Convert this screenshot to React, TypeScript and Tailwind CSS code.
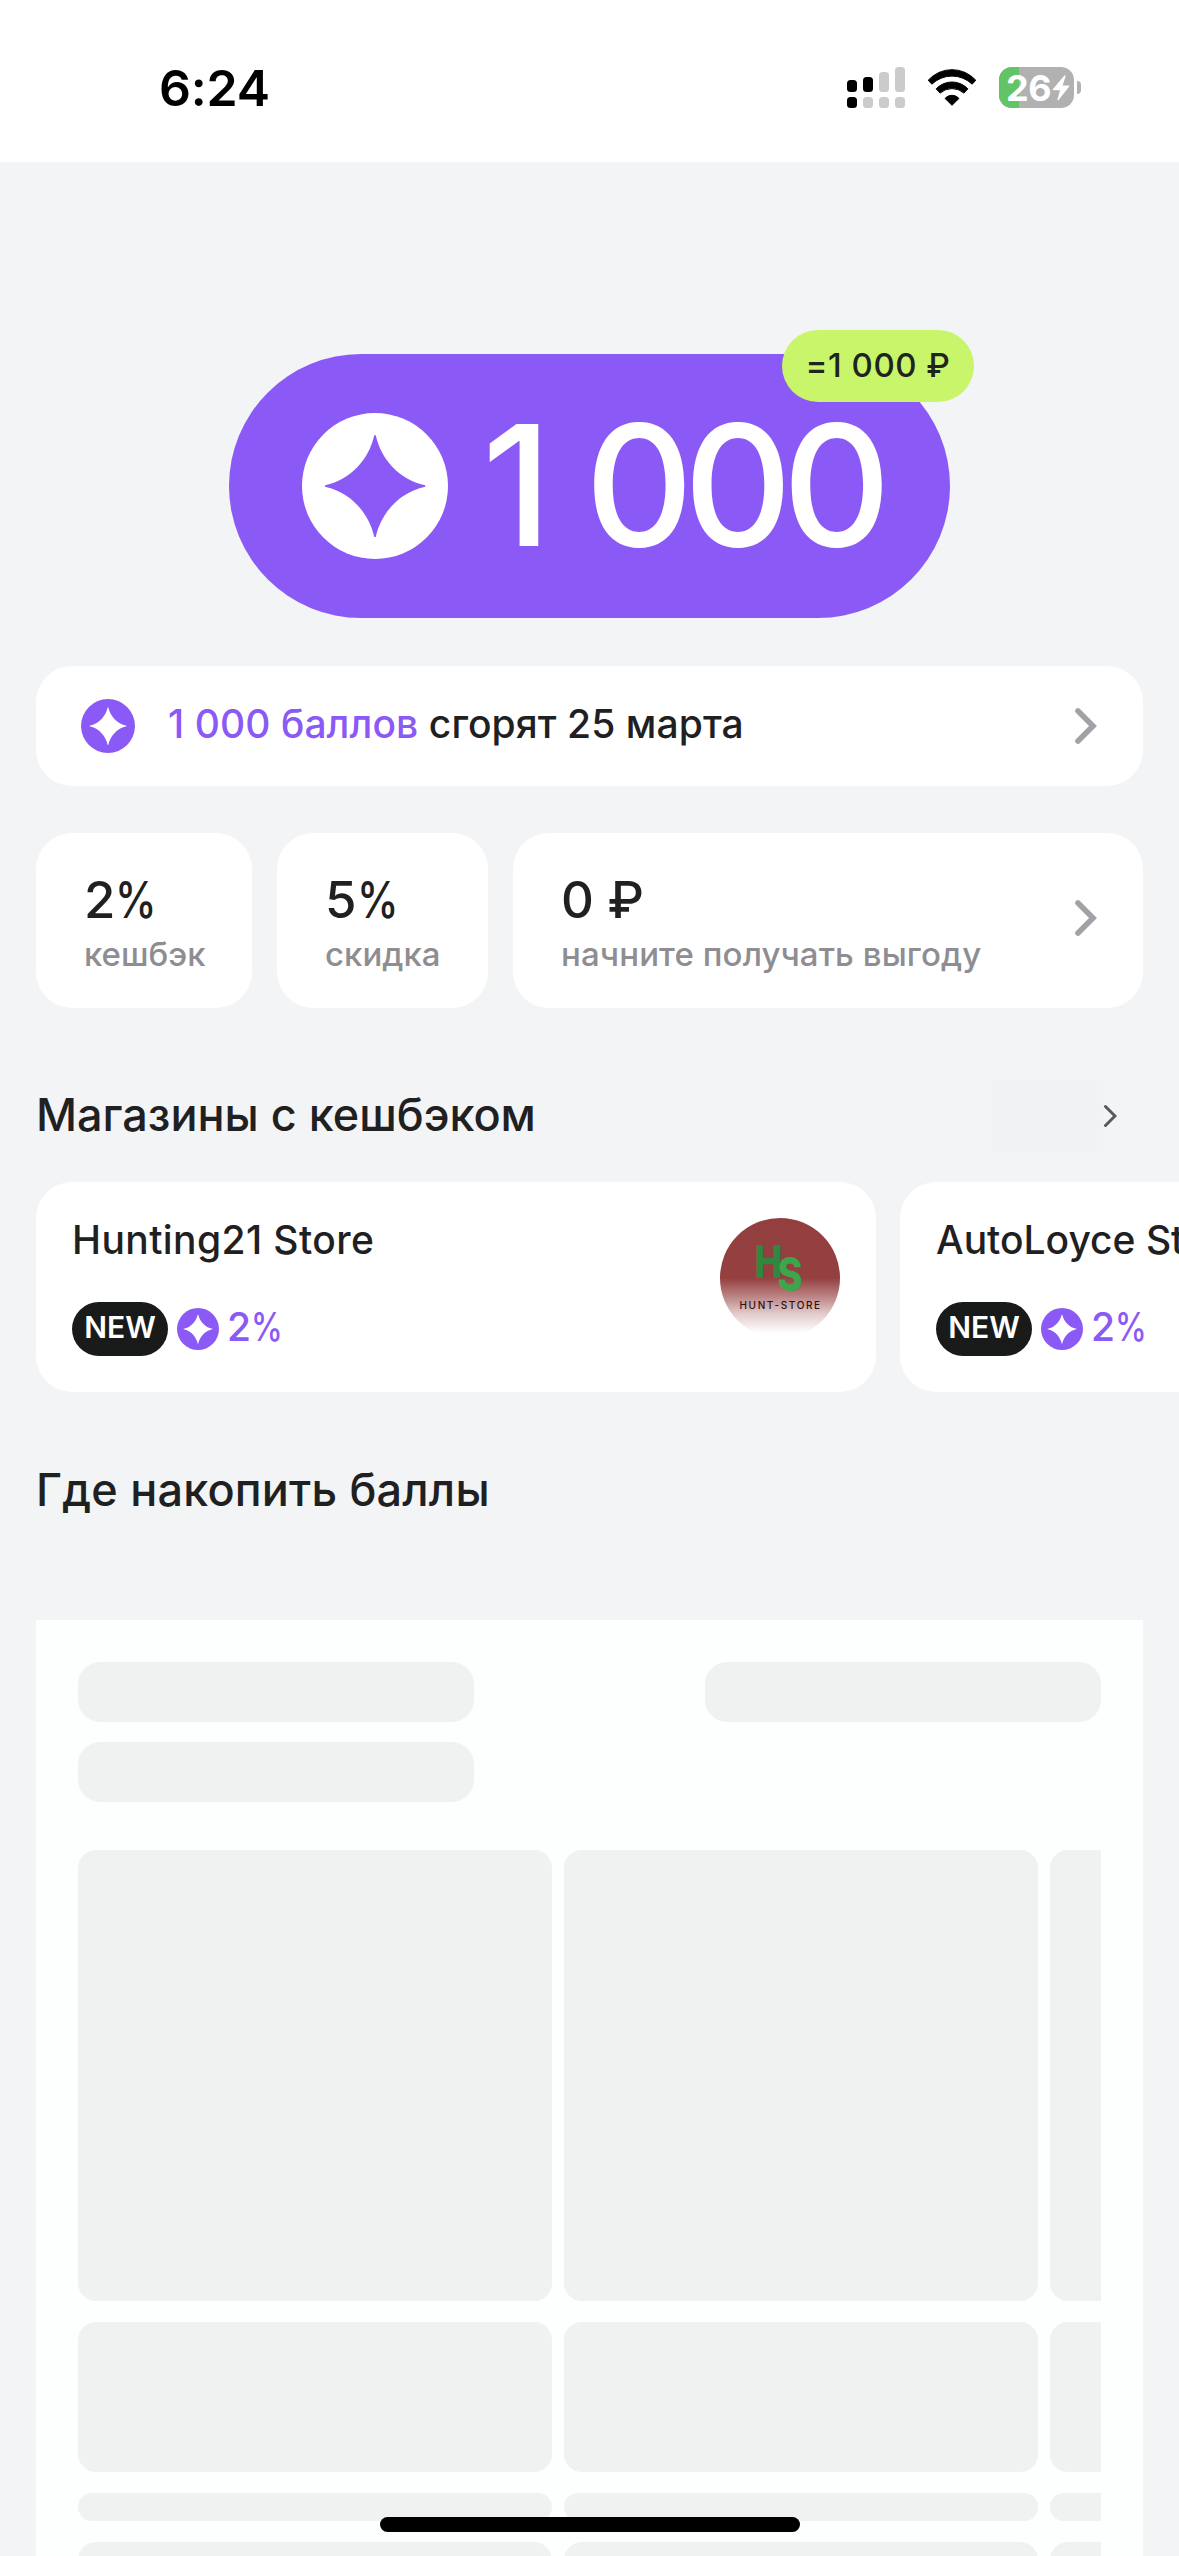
const stores = [
  { name: "Hunting21 Store", cashback: "2", tracking: "tracking-[0.4px]", logo: true },
  { name: "AutoLoyce Store", cashback: "2", tracking: "tracking-normal", logo: false },
]

const skeletonRows = ["h-[451px]", "h-[150px]", "h-7", "h-[150px]"]

interface StarCoinProps {
  className?: string
  star?: string
}

function StarCoin({ className = "", star = "fill-white" }: StarCoinProps) {
  return (
    <svg viewBox="0 0 100 100" className={`shrink-0 ${className}`}>
      <circle cx="50" cy="50" r="50" fill="currentColor" />
      <path
        className={star}
        d="M49.5 15.2h1C54 31 66 45.5 84.4 49.5v1C66 54.5 54 69 50.5 85h-1C46 69 34 54.5 15.8 50.5v-1C34 45.5 46 31 49.5 15.2Z"
      />
    </svg>
  )
}

function Chevron() {
  return (
    <svg viewBox="0 0 24 40" className="h-10 w-6 shrink-0 text-[#a1a1a6]" fill="none">
      <path d="M5 5l15 15L5 35" stroke="currentColor" strokeWidth="5.6" strokeLinecap="round" />
    </svg>
  )
}

function Percent({ value }: { value: string }) {
  return (
    <span className="whitespace-nowrap">
      {value}
      <span className="inline-block origin-left scale-x-[0.82]">%</span>
    </span>
  )
}

function StatusBar() {
  return (
    <header className="flex h-[162px] items-start justify-between bg-white pl-[159px] pr-[98px] text-black">
      <span className="mt-[58px] text-[50px] font-semibold leading-[60px] tracking-[-0.2px]">6:24</span>
      <div className="mt-[67px] flex">
        <svg viewBox="0 0 58 41" className="h-[41px] w-[58px]">
          <rect x="0" y="13" width="10" height="12" rx="3.5" />
          <rect x="16" y="10" width="10" height="15" rx="3.5" />
          <g fill="#cbcbcb">
            <rect x="32" y="5" width="10" height="20" rx="3.5" />
            <rect x="48" y="0" width="10" height="25" rx="3.5" />
            <rect x="16" y="30" width="10" height="11" rx="3.5" />
            <rect x="32" y="30" width="10" height="11" rx="3.5" />
            <rect x="48" y="30" width="10" height="11" rx="3.5" />
          </g>
          <rect x="0" y="30" width="10" height="11" rx="3.5" />
        </svg>
        <svg viewBox="0 0 150 112" className="ml-[22px] mt-[2px] h-[37px] w-[50px]">
          <g stroke="#000" strokeWidth="3" strokeLinejoin="round">
            <path d="M3 34A97 97 0 0 1 147 34L136 46A88 88 0 0 0 14 46Z" />
            <path d="M27 60A66 66 0 0 1 123 60L111 73A54 54 0 0 0 39 73Z" />
            <path d="M54 89A28 28 0 0 1 96 89L75 110Z" />
          </g>
        </svg>
        <div className="relative ml-[22px] h-[41px] w-[75px] overflow-hidden rounded-[13px] bg-[#b1b1b1]">
          <div className="h-full w-5 bg-[#62c466]" />
          <div className="absolute inset-0 flex items-center pl-[7px]">
            <span className="text-[36px] font-bold leading-none tracking-[-0.5px] text-white">26</span>
            <svg viewBox="0 0 18 26" className="ml-px h-[26px] w-[18px] fill-white">
              <path d="M12.4.6 1 14q-.8 1.200.6 1.200H8L5.400 24.800q.3.900 1.200.200L17 11.700q.8-1.300-.6-1.300H10.600L13.600 1.200Q13.200-.2 12.400.6Z" />
            </svg>
          </div>
        </div>
        <div className="ml-[3px] mt-[14px] h-[13px] w-1 rounded-r-full bg-[#b1b1b1]" />
      </div>
    </header>
  )
}

function BalancePill() {
  return (
    <div className="relative mx-auto flex h-[264px] w-[721px] items-center rounded-full bg-[#8b59f6] pl-[73px] text-white">
      <StarCoin className="size-[146px]" star="fill-[#8b59f6]" />
      <span className="ml-[34px] whitespace-nowrap pb-0.5 text-[168px] font-medium leading-none tracking-[-9.7px] [word-spacing:8px]">
        1 000
      </span>
      <div className="absolute -right-6 -top-6 flex h-[72px] w-48 items-center justify-center rounded-full bg-[#c8f569] text-[33px] font-medium tracking-[0.5px] text-[#1f2420]">
        =1 000 ₽
      </div>
    </div>
  )
}

function Stats() {
  return (
    <section className="mt-[47px] flex gap-[25px] whitespace-nowrap">
      <div className="h-[175px] w-[216px] rounded-[36px] bg-white pl-12 pt-[42px]">
        <p className="text-[51px] font-medium leading-[50px]"><Percent value="2" /></p>
        <p className="mt-[9px] text-[33px] font-medium leading-10 text-[#8e8e92]">кешбэк</p>
      </div>
      <div className="h-[175px] w-[211px] rounded-[36px] bg-white pl-12 pt-[42px]">
        <p className="text-[51px] font-medium leading-[50px]"><Percent value="5" /></p>
        <p className="mt-[9px] text-[33px] font-medium leading-10 text-[#8e8e92]">скидка</p>
      </div>
      <div className="flex h-[175px] flex-1 items-center justify-between rounded-[36px] bg-white pl-12 pr-[46px]">
        <div className="h-full pt-[42px]">
          <p className="text-[51px] font-medium leading-[50px]">0 ₽</p>
          <p className="mt-[9px] text-[33px] font-medium leading-10 tracking-[0.1px] text-[#8e8e92]">
            начните получать выгоду
          </p>
        </div>
        <div className="pb-[5px]">
          <Chevron />
        </div>
      </div>
    </section>
  )
}

function HuntStoreLogo() {
  return (
    <svg viewBox="0 0 120 120" className="size-[120px] shrink-0 font-[Inter,sans-serif]">
      <defs>
        <linearGradient id="hunt-bg" x1="0" y1="0" x2="0" y2="1">
          <stop offset="0" stopColor="#943f3f" />
          <stop offset="0.5" stopColor="#943f40" />
          <stop offset="0.64" stopColor="#b87d7d" />
          <stop offset="0.8" stopColor="#e3cccc" />
          <stop offset="0.96" stopColor="#ffffff" />
        </linearGradient>
      </defs>
      <circle cx="60" cy="60" r="60" fill="url(#hunt-bg)" />
      <text x="34.500" y="59.500" fontSize="45" fontWeight="800" fill="#2f8740" textLength="28" lengthAdjust="spacingAndGlyphs">H</text>
      <text x="57.500" y="72.500" fontSize="46" fontWeight="800" fill="#3da54b" textLength="25" lengthAdjust="spacingAndGlyphs">S</text>
      <text x="19.500" y="91" fontSize="10" fontWeight="500" fill="#2a1212" letterSpacing="1.650">HUNT-STORE</text>
    </svg>
  )
}

function StoreCards() {
  return (
    <div className="mt-[30px] flex gap-6">
      {stores.map((store) => (
        <article key={store.name} className="flex h-[210px] w-[840px] shrink-0 justify-between rounded-[36px] bg-white px-9">
          <div className="pt-[34px]">
            <h3 className={`whitespace-nowrap text-[39px] font-medium leading-[48px] ${store.tracking}`}>{store.name}</h3>
            <div className="mt-[38px] flex h-[54px] items-center">
              <span className="flex h-[54px] w-24 items-center justify-center rounded-full bg-[#191a1a] pb-1 text-[30px] font-semibold text-white">
                NEW
              </span>
              <StarCoin className="ml-[9px] size-[42px] text-[#8b59f6]" />
              <span className="ml-2 pb-1.5 text-[39px] font-medium leading-none text-[#8b59f6]">
                <Percent value={store.cashback} />
              </span>
            </div>
          </div>
          {store.logo && (
            <div className="pt-9">
              <HuntStoreLogo />
            </div>
          )}
        </article>
      ))}
    </div>
  )
}

function PlacesSkeleton() {
  return (
    <section className="mt-[100px] h-[960px] bg-[#fdfffe] px-[42px] pt-[42px]">
      <div className="flex items-start justify-between">
        <div className="flex flex-col gap-5">
          <div className="h-[60px] w-[396px] rounded-[22px] bg-[#f0f2f1]" />
          <div className="h-[60px] w-[396px] rounded-[22px] bg-[#f0f2f1]" />
        </div>
        <div className="h-[60px] w-[396px] rounded-[22px] bg-[#f0f2f1]" />
      </div>
      <div className="mt-12 flex flex-col gap-[21px] overflow-hidden">
        {skeletonRows.map((height, i) => (
          <div key={i} className="flex gap-3">
            <div className={`w-[474px] shrink-0 rounded-[18px] bg-[#f0f2f1] ${height}`} />
            <div className={`w-[474px] shrink-0 rounded-[18px] bg-[#f0f2f1] ${height}`} />
            <div className={`w-[474px] shrink-0 rounded-[18px] bg-[#f0f2f1] ${height}`} />
          </div>
        ))}
      </div>
    </section>
  )
}

export default function App() {
  return (
    <div className="relative h-[2556px] w-[1179px] overflow-hidden bg-[#f3f4f5] font-[Inter,sans-serif] text-[#1f2021]">
      <StatusBar />
      <main className="px-9 pt-48">
        <BalancePill />

        {/* Expiring points */}
        <section className="mt-12 flex h-[120px] items-center rounded-[36px] bg-white pl-[45px] pr-[46px]">
          <StarCoin className="size-[54px] text-[#8b59f6]" />
          <p className="ml-[33px] flex-1 whitespace-nowrap pb-1 text-[39px] font-medium leading-[48px] tracking-[0.08px]">
            <span className="text-[#8b59f6]">1 000 баллов</span> сгорят 25 марта
          </p>
          <Chevron />
        </section>

        <Stats />

        {/* Cashback stores */}
        <section>
          <div className="mt-[72px] flex h-[72px] items-center pr-[26px]">
            <h2 className="flex-1 whitespace-nowrap pb-0.5 text-[45px] font-medium leading-[60px]">Магазины с кешбэком</h2>
            <div className="h-full w-28 bg-[#f0f2f3]" />
            <svg viewBox="0 0 14 24" className="h-6 w-[14px] text-[#58595b]" fill="none">
              <path d="M2.500 2.500 12 12l-9.500 9.500" stroke="currentColor" strokeWidth="3" strokeLinecap="round" />
            </svg>
          </div>
          <StoreCards />
        </section>

        <h2 className="mt-[68px] whitespace-nowrap text-[45px] font-medium leading-[60px] tracking-[0.2px]">
          Где накопить баллы
        </h2>
        <PlacesSkeleton />
      </main>

      {/* Home indicator */}
      <div className="absolute bottom-6 left-[380px] h-[15px] w-[420px] rounded-full bg-black" />
    </div>
  )
}
